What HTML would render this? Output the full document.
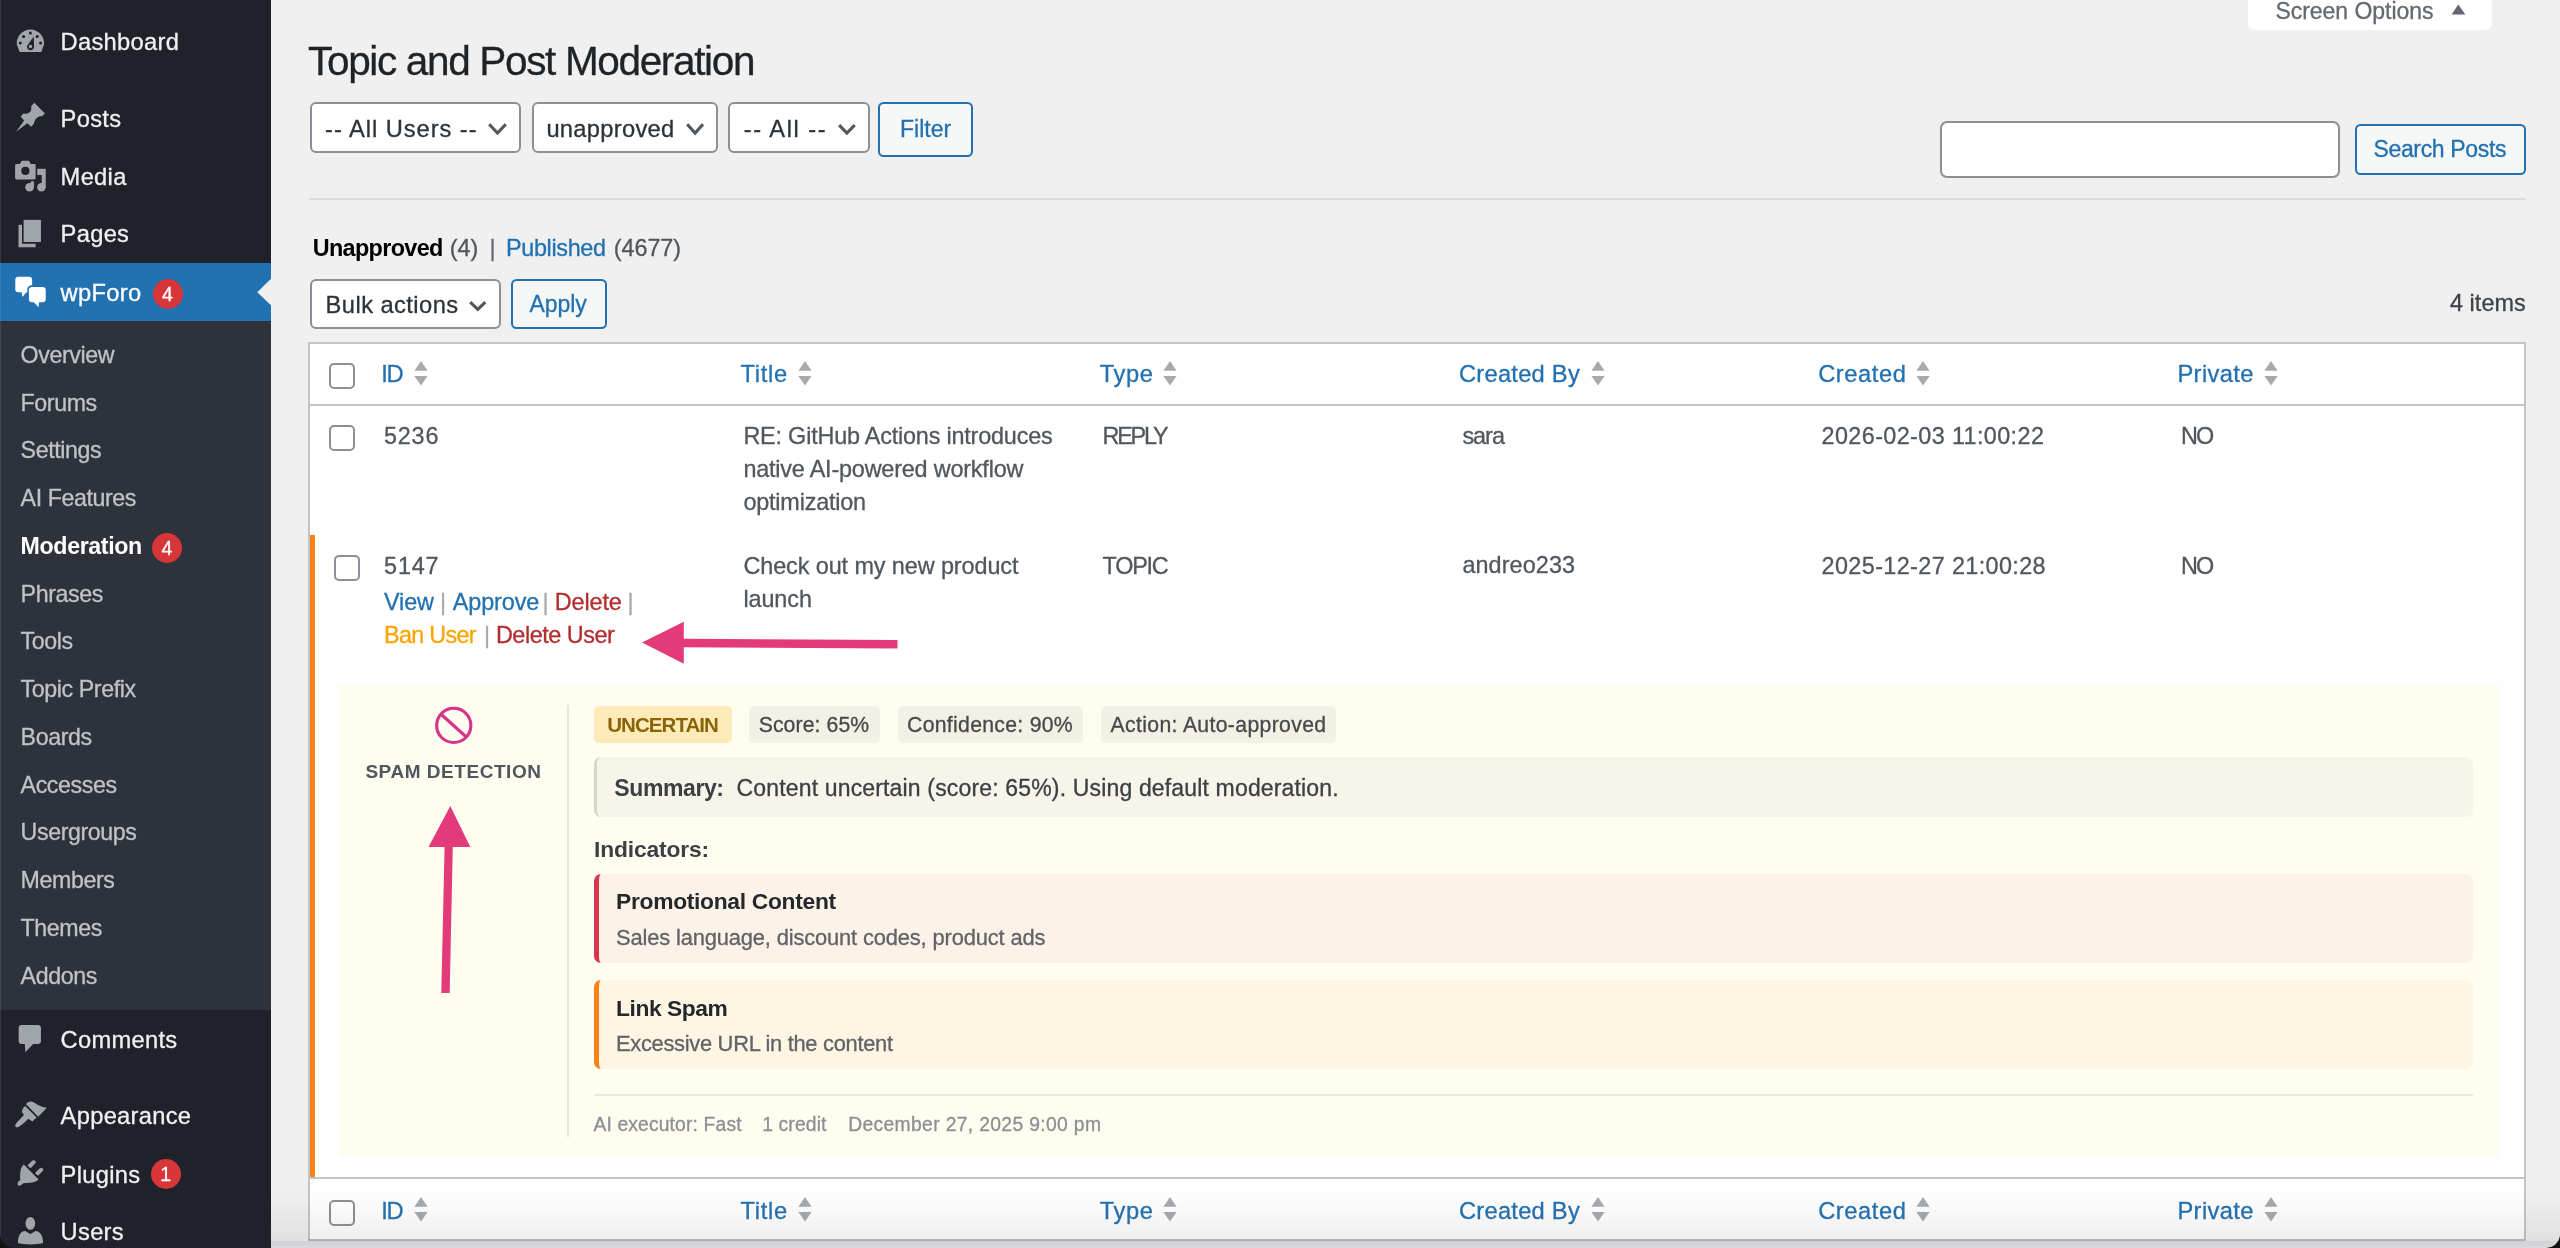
<!DOCTYPE html><html><head><meta charset='utf-8'><title>Topic and Post Moderation</title><style>
*{box-sizing:border-box;margin:0;padding:0}
html,body{width:2560px;height:1248px;overflow:hidden}
body{position:relative;will-change:transform;background:#f0f0f1;font-family:"Liberation Sans",sans-serif;-webkit-font-smoothing:antialiased}
.t{position:absolute;white-space:pre;line-height:1;-webkit-text-stroke:0.3px}
.r{position:absolute}
</style></head><body>
<div class="r" style="left:0.00px;top:0.00px;width:271.00px;height:1248.00px;background:#1f222a;"></div>
<div class="r" style="left:0.00px;top:321.00px;width:271.00px;height:689.00px;background:#2e323a;"></div>
<div class="r" style="left:0.00px;top:263.00px;width:271.00px;height:58.00px;background:#2271b1;"></div>
<svg class="r" style="left:256px;top:277px;" width="16" height="30" viewBox="0 0 16 30"><polygon points="16,0.8 1.3,15.2 16,29.2" fill="#f0f0f1"/></svg>
<div class="t" style="left:60.60px;top:31.44px;font-size:23.7px;color:#f0f0f1;font-weight:400;letter-spacing:0.3px;">Dashboard</div>
<div class="t" style="left:60.60px;top:108.04px;font-size:23.7px;color:#f0f0f1;font-weight:400;letter-spacing:0.3px;">Posts</div>
<div class="t" style="left:60.60px;top:165.74px;font-size:23.7px;color:#f0f0f1;font-weight:400;letter-spacing:0.3px;">Media</div>
<div class="t" style="left:60.60px;top:223.44px;font-size:23.7px;color:#f0f0f1;font-weight:400;letter-spacing:0.3px;">Pages</div>
<div class="t" style="left:60.60px;top:282.04px;font-size:23.7px;color:#fff;font-weight:400;letter-spacing:0.3px;">wpForo</div>
<div class="t" style="left:60.60px;top:1029.14px;font-size:23.7px;color:#f0f0f1;font-weight:400;letter-spacing:0.3px;">Comments</div>
<div class="t" style="left:60.60px;top:1104.94px;font-size:23.7px;color:#f0f0f1;font-weight:400;letter-spacing:0.3px;">Appearance</div>
<div class="t" style="left:60.60px;top:1163.54px;font-size:23.7px;color:#f0f0f1;font-weight:400;letter-spacing:0.3px;">Plugins</div>
<div class="t" style="left:60.60px;top:1220.74px;font-size:23.7px;color:#f0f0f1;font-weight:400;letter-spacing:0.3px;">Users</div>
<div class="r" style="left:152.60px;top:278.80px;width:30.00px;height:30.00px;background:#d63638;border-radius:50%"></div>
<div class="t" style="left:162.00px;top:284.59px;font-size:19.5px;color:#fff;font-weight:400;letter-spacing:0.0px;">4</div>
<div class="r" style="left:150.90px;top:1159.40px;width:30.00px;height:30.00px;background:#d63638;border-radius:50%"></div>
<div class="t" style="left:160.30px;top:1165.19px;font-size:19.5px;color:#fff;font-weight:400;letter-spacing:0.0px;">1</div>
<div class="t" style="left:20.60px;top:343.96px;font-size:23.2px;color:#bfc3c8;font-weight:400;letter-spacing:-0.4px;">Overview</div>
<div class="t" style="left:20.60px;top:391.71px;font-size:23.2px;color:#bfc3c8;font-weight:400;letter-spacing:-0.4px;">Forums</div>
<div class="t" style="left:20.60px;top:439.46px;font-size:23.2px;color:#bfc3c8;font-weight:400;letter-spacing:-0.4px;">Settings</div>
<div class="t" style="left:20.60px;top:487.21px;font-size:23.2px;color:#bfc3c8;font-weight:400;letter-spacing:-0.4px;">AI Features</div>
<div class="t" style="left:20.60px;top:534.96px;font-size:23.2px;color:#fff;font-weight:700;letter-spacing:-0.37px;-webkit-text-stroke:0;">Moderation</div>
<div class="t" style="left:20.60px;top:582.71px;font-size:23.2px;color:#bfc3c8;font-weight:400;letter-spacing:-0.4px;">Phrases</div>
<div class="t" style="left:20.60px;top:630.46px;font-size:23.2px;color:#bfc3c8;font-weight:400;letter-spacing:-0.4px;">Tools</div>
<div class="t" style="left:20.60px;top:678.21px;font-size:23.2px;color:#bfc3c8;font-weight:400;letter-spacing:-0.4px;">Topic Prefix</div>
<div class="t" style="left:20.60px;top:725.96px;font-size:23.2px;color:#bfc3c8;font-weight:400;letter-spacing:-0.4px;">Boards</div>
<div class="t" style="left:20.60px;top:773.71px;font-size:23.2px;color:#bfc3c8;font-weight:400;letter-spacing:-0.4px;">Accesses</div>
<div class="t" style="left:20.60px;top:821.46px;font-size:23.2px;color:#bfc3c8;font-weight:400;letter-spacing:-0.4px;">Usergroups</div>
<div class="t" style="left:20.60px;top:869.21px;font-size:23.2px;color:#bfc3c8;font-weight:400;letter-spacing:-0.4px;">Members</div>
<div class="t" style="left:20.60px;top:916.96px;font-size:23.2px;color:#bfc3c8;font-weight:400;letter-spacing:-0.4px;">Themes</div>
<div class="t" style="left:20.60px;top:964.71px;font-size:23.2px;color:#bfc3c8;font-weight:400;letter-spacing:-0.4px;">Addons</div>
<div class="r" style="left:152.00px;top:532.90px;width:30.00px;height:30.00px;background:#d63638;border-radius:50%"></div>
<div class="t" style="left:161.40px;top:538.69px;font-size:19.5px;color:#fff;font-weight:400;letter-spacing:0.0px;">4</div>
<div class="r" style="left:0.00px;top:0.00px;width:1.00px;height:1248.00px;background:rgba(255,255,255,0.09);"></div>
<svg class="r" style="left:10px;top:22px;" width="40" height="40" viewBox="0 0 1248 1248"><path d="M300 935 L214 700 A425 425 0 1 1 1060 700 L975 935 Z" fill="#a0a5aa"/>
      <circle cx="635" cy="345" r="48" fill="#1f222a"/><circle cx="425" cy="450" r="48" fill="#1f222a"/>
      <circle cx="850" cy="450" r="48" fill="#1f222a"/><circle cx="322" cy="655" r="48" fill="#1f222a"/>
      <circle cx="955" cy="655" r="48" fill="#1f222a"/>
      <path d="M740 455 L750 765 A110 110 0 1 1 535 740 Z" fill="#1f222a"/>
      <circle cx="640" cy="765" r="52" fill="#a0a5aa"/></svg>
<svg class="r" style="left:10px;top:98px;" width="40" height="40" viewBox="0 0 1248 1248"><path d="M190 1055 L440 705 L330 580 L420 480 C520 510 620 470 660 380 L665 250 L760 150 L1090 480 L1000 570
      C880 560 770 640 745 800 L660 900 L540 790 Z" fill="#a0a5aa"/></svg>
<svg class="r" style="left:10px;top:156px;" width="40" height="40" viewBox="0 0 1248 1248"><path d="M200 250 L300 250 L370 150 L590 150 L650 250 L760 250 Q800 250 800 290 L800 690 Q800 730 760 730
      L200 730 Q160 730 160 690 L160 290 Q160 250 200 250 Z" fill="#a0a5aa"/>
      <circle cx="480" cy="465" r="128" fill="#1f222a"/>
      <path d="M850 400 L1115 400 L1115 990 L990 990 L990 590 L850 590 Z" fill="#a0a5aa"/>
      <circle cx="980" cy="975" r="132" fill="#a0a5aa"/>
      <path d="M650 790 L745 790 L745 985 L640 985 Z" fill="#a0a5aa"/>
      <circle cx="610" cy="975" r="135" fill="#a0a5aa"/></svg>
<svg class="r" style="left:10px;top:213px;" width="40" height="40" viewBox="0 0 1248 1248"><path d="M265 370 L375 370 L375 960 L800 960 L800 1065 L265 1065 Z" fill="#a0a5aa"/>
      <rect x="425" y="215" width="540" height="690" fill="#a0a5aa"/></svg>
<svg class="r" style="left:10px;top:272px;" width="40" height="40" viewBox="0 0 1248 1248"><rect x="165" y="150" width="525" height="480" rx="95" fill="#fff"/>
      <path d="M360 600 L385 780 L540 600 Z" fill="#fff"/>
      <rect x="540" y="415" width="625" height="580" rx="130" fill="#2271b1"/>
      <rect x="590" y="465" width="525" height="480" rx="95" fill="#fff"/>
      <path d="M730 930 L890 1100 L910 930 Z" fill="#fff"/></svg>
<svg class="r" style="left:10px;top:1019px;" width="40" height="40" viewBox="0 0 1248 1248"><rect x="270" y="185" width="695" height="595" rx="95" fill="#a0a5aa"/>
      <path d="M460 760 L480 1035 L745 760 Z" fill="#a0a5aa"/></svg>
<svg class="r" style="left:10px;top:1095px;" width="40" height="40" viewBox="0 0 1248 1248"><path d="M500 290 C560 200 650 180 740 230 C830 290 920 370 1150 400 L880 680 Z" fill="#a0a5aa"/>
      <path d="M470 340 L830 700 L700 830 L570 740 C500 830 360 940 250 1010 C170 1030 140 960 180 900
      C260 800 360 720 440 610 C370 560 330 470 470 340 Z" fill="#a0a5aa"/></svg>
<svg class="r" style="left:10px;top:1153px;" width="40" height="40" viewBox="0 0 1248 1248"><path d="M430 355 L890 825 C800 920 620 935 420 940 L340 1010 C300 1040 240 1020 235 960
      C230 920 260 880 320 840 C310 640 310 470 430 355 Z" fill="#a0a5aa"/>
      <path d="M545 390 L690 245 C740 195 820 240 800 310 L640 475 Z" fill="#a0a5aa"/>
      <path d="M780 625 L925 480 C975 430 1055 475 1035 545 L875 710 Z" fill="#a0a5aa"/></svg>
<svg class="r" style="left:10px;top:1208px;" width="40" height="40" viewBox="0 0 1248 1248"><ellipse cx="635" cy="480" rx="150" ry="200" fill="#a0a5aa"/>
      <path d="M250 1090 C240 880 330 730 470 720 L635 810 L800 720 C940 730 1040 880 1030 1090
      C800 1150 480 1150 250 1090 Z" fill="#a0a5aa"/></svg>
<div class="r" style="left:2248.00px;top:-10.00px;width:244.00px;height:39.60px;background:#fff;border-radius:0 0 7px 7px"></div>
<div class="t" style="left:2275.40px;top:0.43px;font-size:23px;color:#646970;font-weight:400;letter-spacing:-0.03px;">Screen Options</div>
<svg class="r" style="left:2451px;top:4px;" width="15" height="11" viewBox="0 0 15 11"><polygon points="7.3,0.5 14.4,10.4 0.6,10.4" fill="#646970"/></svg>
<div class="t" style="left:308.10px;top:41.32px;font-size:40.5px;color:#1d2327;font-weight:400;letter-spacing:-1.34px;">Topic and Post Moderation</div>
<div class="r" style="left:310.00px;top:102.00px;width:211.00px;height:51.00px;background:#fff;border:2px solid #8c8f94;border-radius:6px"></div>
<div class="t" style="left:325.10px;top:117.54px;font-size:23.7px;color:#2c3338;font-weight:400;letter-spacing:0.95px;">-- All Users --</div>
<svg class="r" style="left:486px;top:121.4px;" width="23" height="15.599999999999994" viewBox="0 0 23.0 15.6"><polyline points="3.2,3.2 11.5,12.1 19.8,3.2" fill="none" stroke="#50575e" stroke-width="3.1" stroke-linecap="butt"/></svg>
<div class="r" style="left:532.00px;top:102.00px;width:186.00px;height:51.00px;background:#fff;border:2px solid #8c8f94;border-radius:6px"></div>
<div class="t" style="left:546.40px;top:117.54px;font-size:23.7px;color:#2c3338;font-weight:400;letter-spacing:0.3px;">unapproved</div>
<svg class="r" style="left:683.5px;top:121.4px;" width="22.200000000000045" height="15.599999999999994" viewBox="0 0 22.2 15.6"><polyline points="3.2,3.2 11.1,12.1 19.0,3.2" fill="none" stroke="#50575e" stroke-width="3.1" stroke-linecap="butt"/></svg>
<div class="r" style="left:728.00px;top:102.00px;width:142.00px;height:51.00px;background:#fff;border:2px solid #8c8f94;border-radius:6px"></div>
<div class="t" style="left:743.80px;top:117.54px;font-size:23.7px;color:#2c3338;font-weight:400;letter-spacing:1.5px;">-- All --</div>
<svg class="r" style="left:835.6px;top:121.5px;" width="21.899999999999977" height="14.5" viewBox="0 0 21.9 14.5"><polyline points="3.2,3.2 10.9,11.0 18.7,3.2" fill="none" stroke="#50575e" stroke-width="3.1" stroke-linecap="butt"/></svg>
<div class="r" style="left:878.00px;top:102.00px;width:95.00px;height:55.00px;background:#f6f7f7;border:2px solid #2271b1;border-radius:5.5px"></div>
<div class="t" style="left:900.00px;top:118.43px;font-size:23px;color:#2271b1;font-weight:400;letter-spacing:0.0px;">Filter</div>
<div class="r" style="left:1940.00px;top:121.00px;width:400.00px;height:57.00px;background:#fff;border:2px solid #8c8f94;border-radius:7px"></div>
<div class="r" style="left:2355.00px;top:124.00px;width:171.00px;height:51.00px;background:#f6f7f7;border:2px solid #2271b1;border-radius:5.5px"></div>
<div class="t" style="left:2373.50px;top:138.43px;font-size:23px;color:#2271b1;font-weight:400;letter-spacing:-0.35px;">Search Posts</div>
<div class="r" style="left:309.00px;top:198.00px;width:2217.00px;height:2.00px;background:#dcdcde;"></div>
<div class="t" style="left:312.75px;top:237.49px;font-size:23.4px;color:#000;font-weight:700;letter-spacing:-0.66px;-webkit-text-stroke:0;">Unapproved</div>
<div class="t" style="left:449.80px;top:237.49px;font-size:23.4px;color:#50575e;font-weight:400;letter-spacing:0.0px;">(4)</div>
<div class="t" style="left:489.60px;top:237.49px;font-size:23.4px;color:#646970;font-weight:400;letter-spacing:0.0px;">|</div>
<div class="t" style="left:506.00px;top:237.49px;font-size:23.4px;color:#2271b1;font-weight:400;letter-spacing:-0.34px;">Published</div>
<div class="t" style="left:613.80px;top:237.49px;font-size:23.4px;color:#50575e;font-weight:400;letter-spacing:-0.06px;">(4677)</div>
<div class="r" style="left:310.00px;top:279.00px;width:191.00px;height:50.00px;background:#fff;border:2px solid #8c8f94;border-radius:6px"></div>
<div class="t" style="left:325.60px;top:293.94px;font-size:23.7px;color:#2c3338;font-weight:400;letter-spacing:0.44px;">Bulk actions</div>
<svg class="r" style="left:466.75px;top:298.5px;" width="21.5" height="13.800000000000011" viewBox="0 0 21.5 13.8"><polyline points="3.2,3.2 10.8,10.3 18.3,3.2" fill="none" stroke="#50575e" stroke-width="3.1" stroke-linecap="butt"/></svg>
<div class="r" style="left:511.00px;top:279.00px;width:96.00px;height:50.00px;background:#f6f7f7;border:2px solid #2271b1;border-radius:5.5px"></div>
<div class="t" style="left:529.50px;top:293.43px;font-size:23px;color:#2271b1;font-weight:400;letter-spacing:-0.07px;">Apply</div>
<div class="t" style="left:2450.00px;top:292.29px;font-size:23.4px;color:#3c434a;font-weight:400;letter-spacing:0.05px;">4 items</div>
<div class="r" style="left:308.00px;top:342.00px;width:2218.00px;height:899.00px;background:#fff;border:2px solid #c3c4c7"></div>
<div class="r" style="left:310.00px;top:404.00px;width:2214.00px;height:2.00px;background:#c3c4c7;"></div>
<div class="r" style="left:329.00px;top:363.00px;width:26.00px;height:26.00px;background:#fff;border:2px solid #8c8f94;border-radius:5px"></div>
<div class="t" style="left:381.30px;top:363.14px;font-size:23.7px;color:#2271b1;font-weight:400;letter-spacing:-1.5px;">ID</div>
<svg class="r" style="left:413.6px;top:361.0px;" width="14" height="25" viewBox="0 0 14 25"><polygon points="7,0 13.6,9.7 0.4,9.7" fill="#a7aaad"/><polygon points="0.4,14.9 13.6,14.9 7,24.6" fill="#a7aaad"/></svg>
<div class="t" style="left:740.40px;top:363.14px;font-size:23.7px;color:#2271b1;font-weight:400;letter-spacing:0.7px;">Title</div>
<svg class="r" style="left:798.0px;top:361.0px;" width="14" height="25" viewBox="0 0 14 25"><polygon points="7,0 13.6,9.7 0.4,9.7" fill="#a7aaad"/><polygon points="0.4,14.9 13.6,14.9 7,24.6" fill="#a7aaad"/></svg>
<div class="t" style="left:1099.80px;top:363.14px;font-size:23.7px;color:#2271b1;font-weight:400;letter-spacing:0.63px;">Type</div>
<svg class="r" style="left:1163.0px;top:361.0px;" width="14" height="25" viewBox="0 0 14 25"><polygon points="7,0 13.6,9.7 0.4,9.7" fill="#a7aaad"/><polygon points="0.4,14.9 13.6,14.9 7,24.6" fill="#a7aaad"/></svg>
<div class="t" style="left:1459.00px;top:363.14px;font-size:23.7px;color:#2271b1;font-weight:400;letter-spacing:0.25px;">Created By</div>
<svg class="r" style="left:1590.5px;top:361.0px;" width="14" height="25" viewBox="0 0 14 25"><polygon points="7,0 13.6,9.7 0.4,9.7" fill="#a7aaad"/><polygon points="0.4,14.9 13.6,14.9 7,24.6" fill="#a7aaad"/></svg>
<div class="t" style="left:1818.20px;top:363.14px;font-size:23.7px;color:#2271b1;font-weight:400;letter-spacing:0.58px;">Created</div>
<svg class="r" style="left:1915.5px;top:361.0px;" width="14" height="25" viewBox="0 0 14 25"><polygon points="7,0 13.6,9.7 0.4,9.7" fill="#a7aaad"/><polygon points="0.4,14.9 13.6,14.9 7,24.6" fill="#a7aaad"/></svg>
<div class="t" style="left:2177.40px;top:363.14px;font-size:23.7px;color:#2271b1;font-weight:400;letter-spacing:0.4px;">Private</div>
<svg class="r" style="left:2263.5px;top:361.0px;" width="14" height="25" viewBox="0 0 14 25"><polygon points="7,0 13.6,9.7 0.4,9.7" fill="#a7aaad"/><polygon points="0.4,14.9 13.6,14.9 7,24.6" fill="#a7aaad"/></svg>
<div class="r" style="left:329.00px;top:425.00px;width:26.00px;height:26.00px;background:#fff;border:2px solid #8c8f94;border-radius:5px"></div>
<div class="t" style="left:384.00px;top:425.09px;font-size:23.4px;color:#50575e;font-weight:400;letter-spacing:0.8px;">5236</div>
<div class="t" style="left:743.40px;top:425.09px;font-size:23.4px;color:#50575e;font-weight:400;letter-spacing:-0.19px;">RE: GitHub Actions introduces</div>
<div class="t" style="left:743.40px;top:457.89px;font-size:23.4px;color:#50575e;font-weight:400;letter-spacing:-0.19px;">native AI-powered workflow</div>
<div class="t" style="left:743.40px;top:490.79px;font-size:23.4px;color:#50575e;font-weight:400;letter-spacing:-0.19px;">optimization</div>
<div class="t" style="left:1102.50px;top:425.09px;font-size:23.4px;color:#50575e;font-weight:400;letter-spacing:-2.2px;">REPLY</div>
<div class="t" style="left:1462.40px;top:425.09px;font-size:23.4px;color:#50575e;font-weight:400;letter-spacing:-1.0px;">sara</div>
<div class="t" style="left:1821.60px;top:425.09px;font-size:23.4px;color:#50575e;font-weight:400;letter-spacing:0.38px;">2026-02-03 11:00:22</div>
<div class="t" style="left:2180.90px;top:425.09px;font-size:23.4px;color:#50575e;font-weight:400;letter-spacing:-1.9px;">NO</div>
<div class="r" style="left:309.60px;top:535.00px;width:5.20px;height:643.50px;background:#fa8219;"></div>
<div class="r" style="left:334.00px;top:555.00px;width:26.00px;height:26.00px;background:#fff;border:2px solid #8c8f94;border-radius:5px"></div>
<div class="t" style="left:384.10px;top:554.79px;font-size:23.4px;color:#50575e;font-weight:400;letter-spacing:0.8px;">5147</div>
<div class="t" style="left:743.40px;top:554.79px;font-size:23.4px;color:#50575e;font-weight:400;letter-spacing:-0.08px;">Check out my new product</div>
<div class="t" style="left:743.40px;top:587.69px;font-size:23.4px;color:#50575e;font-weight:400;letter-spacing:-0.08px;">launch</div>
<div class="t" style="left:1102.50px;top:554.79px;font-size:23.4px;color:#50575e;font-weight:400;letter-spacing:-1.2px;">TOPIC</div>
<div class="t" style="left:1462.40px;top:554.39px;font-size:23.4px;color:#50575e;font-weight:400;letter-spacing:0.1px;">andreo233</div>
<div class="t" style="left:1821.60px;top:554.79px;font-size:23.4px;color:#50575e;font-weight:400;letter-spacing:0.38px;">2025-12-27 21:00:28</div>
<div class="t" style="left:2180.90px;top:554.79px;font-size:23.4px;color:#50575e;font-weight:400;letter-spacing:-1.9px;">NO</div>
<div class="t" style="left:384.00px;top:590.89px;font-size:23.4px;color:#2271b1;font-weight:400;letter-spacing:-0.1px;">View</div>
<div class="t" style="left:440.00px;top:590.89px;font-size:23.4px;color:#a7aaad;font-weight:400;letter-spacing:0.0px;">|</div>
<div class="t" style="left:452.80px;top:590.89px;font-size:23.4px;color:#2271b1;font-weight:400;letter-spacing:-0.1px;">Approve</div>
<div class="t" style="left:542.50px;top:590.89px;font-size:23.4px;color:#a7aaad;font-weight:400;letter-spacing:0.0px;">|</div>
<div class="t" style="left:554.70px;top:590.89px;font-size:23.4px;color:#b32d2e;font-weight:400;letter-spacing:-0.1px;">Delete</div>
<div class="t" style="left:627.50px;top:590.89px;font-size:23.4px;color:#a7aaad;font-weight:400;letter-spacing:0.0px;">|</div>
<div class="t" style="left:384.00px;top:623.69px;font-size:23.4px;color:#fda400;font-weight:400;letter-spacing:-0.7px;">Ban User</div>
<div class="t" style="left:484.00px;top:623.69px;font-size:23.4px;color:#a7aaad;font-weight:400;letter-spacing:0.0px;">|</div>
<div class="t" style="left:495.90px;top:623.69px;font-size:23.4px;color:#b32d2e;font-weight:400;letter-spacing:-0.45px;">Delete User</div>
<div class="r" style="left:340.40px;top:685.00px;width:2158.40px;height:472.30px;background:#fffcf0;"></div>
<svg class="r" style="left:432px;top:704px;" width="44" height="44" viewBox="0 0 44 44"><circle cx="21.75" cy="21.4" r="17.1" fill="none" stroke="#d6338a" stroke-width="3.1"/><line x1="9.9" y1="11" x2="34.3" y2="33" stroke="#d6338a" stroke-width="3.1"/></svg>
<div class="t" style="left:365.40px;top:761.72px;font-size:19px;color:#50575e;font-weight:700;letter-spacing:0.54px;-webkit-text-stroke:0;">SPAM DETECTION</div>
<div class="r" style="left:567.30px;top:705.00px;width:1.50px;height:431.60px;background:#e9e5d6;"></div>
<div class="r" style="left:594.40px;top:705.50px;width:137.40px;height:37.80px;background:#feebb9;border-radius:5px"></div>
<div class="t" style="left:607.20px;top:715.15px;font-size:20.5px;color:#8a6508;font-weight:700;letter-spacing:-0.94px;-webkit-text-stroke:0;">UNCERTAIN</div>
<div class="r" style="left:748.70px;top:705.50px;width:131.50px;height:37.80px;background:#f3f0e6;border-radius:5px"></div>
<div class="t" style="left:758.70px;top:713.55px;font-size:21.2px;color:#48494b;font-weight:400;letter-spacing:0.1px;">Score: 65%</div>
<div class="r" style="left:897.80px;top:705.50px;width:185.60px;height:37.80px;background:#f3f0e6;border-radius:5px"></div>
<div class="t" style="left:907.10px;top:713.55px;font-size:21.2px;color:#48494b;font-weight:400;letter-spacing:0.3px;">Confidence: 90%</div>
<div class="r" style="left:1100.90px;top:705.50px;width:235.10px;height:37.80px;background:#f3f0e6;border-radius:5px"></div>
<div class="t" style="left:1110.60px;top:713.55px;font-size:21.2px;color:#48494b;font-weight:400;letter-spacing:0.35px;">Action: Auto-approved</div>
<div class="r" style="left:594.40px;top:756.80px;width:1879.10px;height:60.00px;background:#f7f4ea;border-left:3.4px solid #d9d5c8;border-radius:7px"></div>
<div class="t" style="left:614.30px;top:776.73px;font-size:23px;color:#3c3f44;font-weight:700;letter-spacing:-0.4px;-webkit-text-stroke:0;">Summary:</div>
<div class="t" style="left:736.50px;top:776.73px;font-size:23px;color:#3c3f44;font-weight:400;letter-spacing:0.16px;">Content uncertain (score: 65%). Using default moderation.</div>
<div class="t" style="left:594.00px;top:837.55px;font-size:22.8px;color:#3c3f44;font-weight:700;letter-spacing:-0.15px;-webkit-text-stroke:0;">Indicators:</div>
<div class="r" style="left:594.20px;top:873.60px;width:1879.30px;height:89.40px;background:#fcf2e8;border-left:5.2px solid #d63650;border-radius:7px"></div>
<div class="t" style="left:616.10px;top:890.10px;font-size:22.8px;color:#23282d;font-weight:700;letter-spacing:-0.3px;-webkit-text-stroke:0;">Promotional Content</div>
<div class="t" style="left:616.00px;top:926.86px;font-size:21.9px;color:#606368;font-weight:400;letter-spacing:-0.15px;">Sales language, discount codes, product ads</div>
<div class="r" style="left:594.20px;top:980.30px;width:1879.30px;height:89.20px;background:#fff5e3;border-left:5.2px solid #fa8219;border-radius:7px"></div>
<div class="t" style="left:616.10px;top:997.10px;font-size:22.8px;color:#23282d;font-weight:700;letter-spacing:-0.45px;-webkit-text-stroke:0;">Link Spam</div>
<div class="t" style="left:616.00px;top:1033.06px;font-size:21.9px;color:#606368;font-weight:400;letter-spacing:-0.3px;">Excessive URL in the content</div>
<div class="r" style="left:594.40px;top:1094.00px;width:1879.10px;height:1.50px;background:#ece8d8;"></div>
<div class="t" style="left:593.40px;top:1114.56px;font-size:19.3px;color:#8c8f94;font-weight:400;letter-spacing:0.15px;">AI executor: Fast</div>
<div class="t" style="left:762.20px;top:1114.56px;font-size:19.3px;color:#8c8f94;font-weight:400;letter-spacing:0.15px;">1 credit</div>
<div class="t" style="left:848.20px;top:1114.56px;font-size:19.3px;color:#8c8f94;font-weight:400;letter-spacing:0.35px;">December 27, 2025 9:00 pm</div>
<div class="r" style="left:271.00px;top:1183.00px;width:2289.00px;height:58.00px;background:linear-gradient(rgba(70,70,80,0) 0%, rgba(70,70,80,0.02) 35%, rgba(70,70,80,0.09) 100%);z-index:5"></div>
<div class="r" style="left:310.00px;top:1177.00px;width:2214.00px;height:2.00px;background:#c3c4c7;"></div>
<div class="r" style="left:308.00px;top:1239.00px;width:2218.00px;height:2.00px;background:#b8b9bc;"></div>
<div class="r" style="left:271.00px;top:1241.00px;width:2289.00px;height:7.00px;background:linear-gradient(#d2d2d5, #dadadd);z-index:5"></div>
<div class="r" style="left:329.00px;top:1200.00px;width:26.00px;height:26.00px;background:#fff;border:2px solid #8c8f94;border-radius:5px"></div>
<div class="t" style="left:381.30px;top:1199.94px;font-size:23.7px;color:#2271b1;font-weight:400;letter-spacing:-1.5px;">ID</div>
<svg class="r" style="left:413.6px;top:1197.2px;" width="14" height="25" viewBox="0 0 14 25"><polygon points="7,0 13.6,9.7 0.4,9.7" fill="#a7aaad"/><polygon points="0.4,14.9 13.6,14.9 7,24.6" fill="#a7aaad"/></svg>
<div class="t" style="left:740.40px;top:1199.94px;font-size:23.7px;color:#2271b1;font-weight:400;letter-spacing:0.7px;">Title</div>
<svg class="r" style="left:798.0px;top:1197.2px;" width="14" height="25" viewBox="0 0 14 25"><polygon points="7,0 13.6,9.7 0.4,9.7" fill="#a7aaad"/><polygon points="0.4,14.9 13.6,14.9 7,24.6" fill="#a7aaad"/></svg>
<div class="t" style="left:1099.80px;top:1199.94px;font-size:23.7px;color:#2271b1;font-weight:400;letter-spacing:0.63px;">Type</div>
<svg class="r" style="left:1163.0px;top:1197.2px;" width="14" height="25" viewBox="0 0 14 25"><polygon points="7,0 13.6,9.7 0.4,9.7" fill="#a7aaad"/><polygon points="0.4,14.9 13.6,14.9 7,24.6" fill="#a7aaad"/></svg>
<div class="t" style="left:1459.00px;top:1199.94px;font-size:23.7px;color:#2271b1;font-weight:400;letter-spacing:0.25px;">Created By</div>
<svg class="r" style="left:1590.5px;top:1197.2px;" width="14" height="25" viewBox="0 0 14 25"><polygon points="7,0 13.6,9.7 0.4,9.7" fill="#a7aaad"/><polygon points="0.4,14.9 13.6,14.9 7,24.6" fill="#a7aaad"/></svg>
<div class="t" style="left:1818.20px;top:1199.94px;font-size:23.7px;color:#2271b1;font-weight:400;letter-spacing:0.58px;">Created</div>
<svg class="r" style="left:1915.5px;top:1197.2px;" width="14" height="25" viewBox="0 0 14 25"><polygon points="7,0 13.6,9.7 0.4,9.7" fill="#a7aaad"/><polygon points="0.4,14.9 13.6,14.9 7,24.6" fill="#a7aaad"/></svg>
<div class="t" style="left:2177.40px;top:1199.94px;font-size:23.7px;color:#2271b1;font-weight:400;letter-spacing:0.4px;">Private</div>
<svg class="r" style="left:2263.5px;top:1197.2px;" width="14" height="25" viewBox="0 0 14 25"><polygon points="7,0 13.6,9.7 0.4,9.7" fill="#a7aaad"/><polygon points="0.4,14.9 13.6,14.9 7,24.6" fill="#a7aaad"/></svg>
<svg class="r" style="left:630px;top:610px;" width="280" height="60" viewBox="0 0 280 60"><polygon points="12,32.5 53.8,11.8 53.8,53.8" fill="#e33a7a"/><polygon points="53,28.7 267.5,30 267.5,38.5 53,37.2" fill="#e33a7a"/></svg>
<svg class="r" style="left:420px;top:800px;" width="60" height="200" viewBox="0 0 60 200"><polygon points="30.3,5.9 8.5,47 50.3,47" fill="#e33a7a"/><polygon points="24.6,46 32.8,46 29.7,193 21.3,193" fill="#e33a7a"/></svg>
<svg class="r" style="left:0;top:1228px;z-index:10" width="20" height="20" viewBox="0 0 20 20"><path d="M0 6 A14 14 0 0 0 14 20 L0 20 Z" fill="#111"/></svg>
<svg class="r" style="left:2540px;top:1228px;z-index:10" width="20" height="20" viewBox="0 0 20 20"><path d="M20 5 A14 14 0 0 1 6 20 L20 20 Z" fill="#111"/></svg>
</body></html>
